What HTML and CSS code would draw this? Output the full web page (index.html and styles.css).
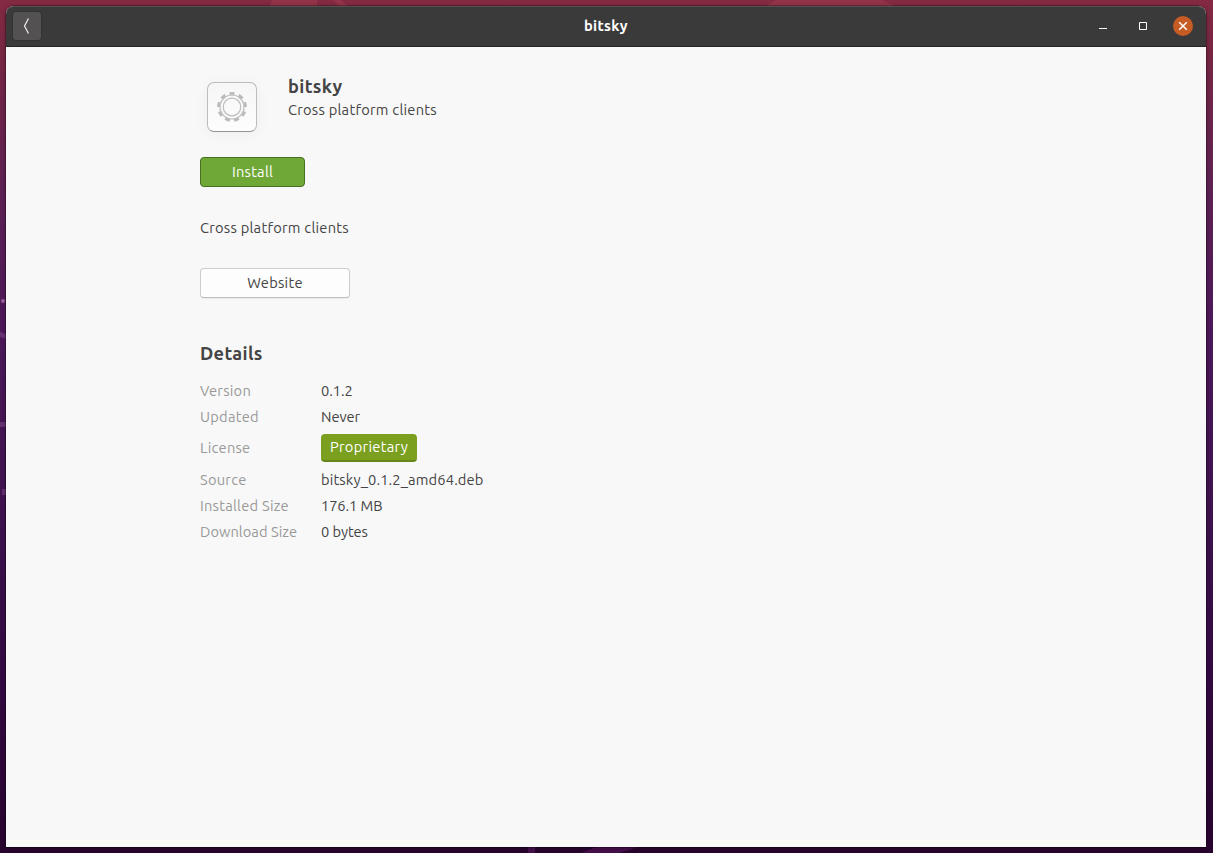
FILE: index.html
```html
<!DOCTYPE html>
<html lang="en">
<head>
<meta charset="utf-8">
<title>bitsky</title>
<link rel="stylesheet" href="styles.css">
</head>
<body>
<svg class="wallpaper" width="1213" height="853" viewBox="0 0 1213 853" aria-hidden="true">
  <g fill="#c4505a" fill-opacity=".25">
    <path d="M272 0h45v6h-47z"/><path d="M333 0h8l7 6h-9z"/><path d="M776 0h106l12 6H766z"/>
  </g>
  <g fill="#b070b0" fill-opacity=".3">
    <circle cx="3" cy="301" r="2" fill-opacity=".8"/><path d="M0 332l6 2v5l-6-2zM0 422h6v5H0zM2 489h4v6H2z"/>
  </g>
  <path fill="#8a2a90" fill-opacity=".3" d="M528 847h7v6h-7zM596 847h42l-19 6h-38z"/>
</svg>
<main class="window">
  <header class="titlebar">
    <button class="back" aria-label="Back"><svg width="28" height="28" viewBox="0 0 28 28"><path d="M15.5 6.5l-4 7.5 4 7.5" fill="none" stroke="#eee" stroke-width="1.2"/></svg></button>
    <h1 class="title">bitsky</h1>
    <div class="controls">
      <svg width="20" height="20" viewBox="0 0 20 20"><path fill="#fff" d="M6 12h8v1H6z"/></svg>
      <svg width="20" height="20" viewBox="0 0 20 20"><path fill="none" stroke="#fff" d="M6.5 6.5h7v7h-7z"/></svg>
      <svg width="20" height="20" viewBox="0 0 20 20"><circle cx="10" cy="10" r="10" fill="#c65c23"/><path fill="none" stroke="#fff" stroke-width="1.5" d="M6.2 6.2l7.6 7.6M13.8 6.2l-7.6 7.6"/></svg>
    </div>
  </header>
  <div class="content">
    <section class="app">
      <div class="app-icon">
        <svg width="32" height="32" viewBox="-16 -16 32 32" fill="none" stroke="#bdbdbd">
          <circle r="13.4" stroke-width="3" stroke="#bababa" pathLength="90" stroke-dasharray="5.2 4.8" stroke-dashoffset="5.1"/>
          <circle r="12" stroke-width="1.2"/><circle r="8.8" stroke-width="1.2"/>
        </svg>
      </div>
      <div class="app-text"><h2 class="app-name">bitsky</h2><p class="summary">Cross platform clients</p></div>
    </section>
    <button class="btn install"><span>Install</span></button>
    <p class="description">Cross platform clients</p>
    <button class="btn website"><span>Website</span></button>
    <h2 class="details-title">Details</h2>
    <dl class="details">
      <dt>Version</dt><dd class="size">0.1.2</dd>
      <dt>Updated</dt><dd class="size">Never</dd>
      <dt>License</dt><dd><span class="badge">Proprietary</span></dd>
      <dt>Source</dt><dd class="package">bitsky_0.1.2_amd64.deb</dd>
      <dt>Installed Size</dt><dd class="size">176.1 MB</dd>
      <dt class="download">Download Size</dt><dd class="size">0 bytes</dd>
    </dl>
  </div>
</main>
</body>
</html>
```
FILE: styles.css
```css
* { box-sizing: border-box; }
body {
  margin: 0; padding: 6px 7px 6px 6px; width: 1213px; height: 853px; overflow: hidden;
  background: linear-gradient(#842a43 0, #782743 50px, #5e2154 190px, #4c185a 330px, #40134f 500px, #330a42 680px, #29042f 853px);
  font: 14.667px/20px Ubuntu, "Noto Sans", sans-serif; letter-spacing: .25px; color: #444;
}
h1, h2, p, dl, dd { margin: 0; }
button { padding: 0; font: inherit; letter-spacing: inherit; }
.wallpaper { position: absolute; left: 0; top: 0; }
.window {
  position: relative; height: 841px; background: #f8f8f8; border-radius: 8px 8px 0 0; overflow: hidden;
  box-shadow: 0 0 0 1px rgba(0,0,0,.22), 0 1px 5px rgba(0,0,0,.3);
}
.titlebar {
  height: 41px; padding: 0 13px 1px 7px; display: grid; grid-template-columns: 100px 1fr 100px; align-items: center;
  background: #3a3a3a; border-bottom: 1px solid #242424; box-shadow: inset 0 1px #515151; border-radius: 8px 8px 0 0;
}
.back { width: 28px; height: 28px; border: 0; border-radius: 3px; background: #535152; box-shadow: 0 0 0 1px #333; }
.back svg { display: block; }
.title { color: #fff; font-size: 14.667px; line-height: 20px; font-weight: 700; text-align: center; padding-left: 6px; }
.controls { display: flex; gap: 20px; justify-content: flex-end; }
.content { padding: 29px 0 0 194px; display: flex; flex-direction: column; align-items: flex-start; }
.app { display: flex; gap: 31px; padding-left: 7px; height: 81px; }
.app-icon {
  width: 50px; height: 50px; margin-top: 6px; display: grid; place-items: center;
  border: 1px solid #bcbcbc; border-bottom-color: #959595; border-radius: 7px;
  background: linear-gradient(#f6f6f6, #fdfdfd); box-shadow: 0 2px 16px rgba(0,0,0,.045);
}
.app-name, .details-title { font-size: 18.2px; line-height: 22px; font-weight: 700; letter-spacing: .35px; }
.app-name { margin-top: -1px; }
.summary { margin-top: 3px; }
.btn { height: 30px; border-radius: 4px; }
.install { width: 105px; color: #fff; background: #70a837; border: 1px solid #477022; }
.description { margin-top: 31px; }
.website { margin-top: 30px; width: 150px; color: #444; background: #fdfdfd; border: 1px solid #cdcdcd; border-bottom-color: #bebebe; box-shadow: 0 1px 1px rgba(0,0,0,.06); }
.details-title { margin-top: 44px; }
.details {
  margin-top: 17px; display: grid; grid-template-columns: 121px auto;
  grid-template-rows: 20px 20px 31px 20px 20px 20px; row-gap: 6px; align-items: center;
}
.details > :nth-child(n+5):nth-child(-n+6) { margin-bottom: 1px; }
dt { color: #999; }
.download { letter-spacing: .05px; }
.package { letter-spacing: .15px; }
.size { letter-spacing: -.08px; }
.badge {
  display: block; width: 96px; height: 28px; line-height: 26px; text-align: center; color: #fff;
  background: #7ba01f; border-bottom: 2px solid #658618; border-radius: 4px; letter-spacing: .3px;
}
```
